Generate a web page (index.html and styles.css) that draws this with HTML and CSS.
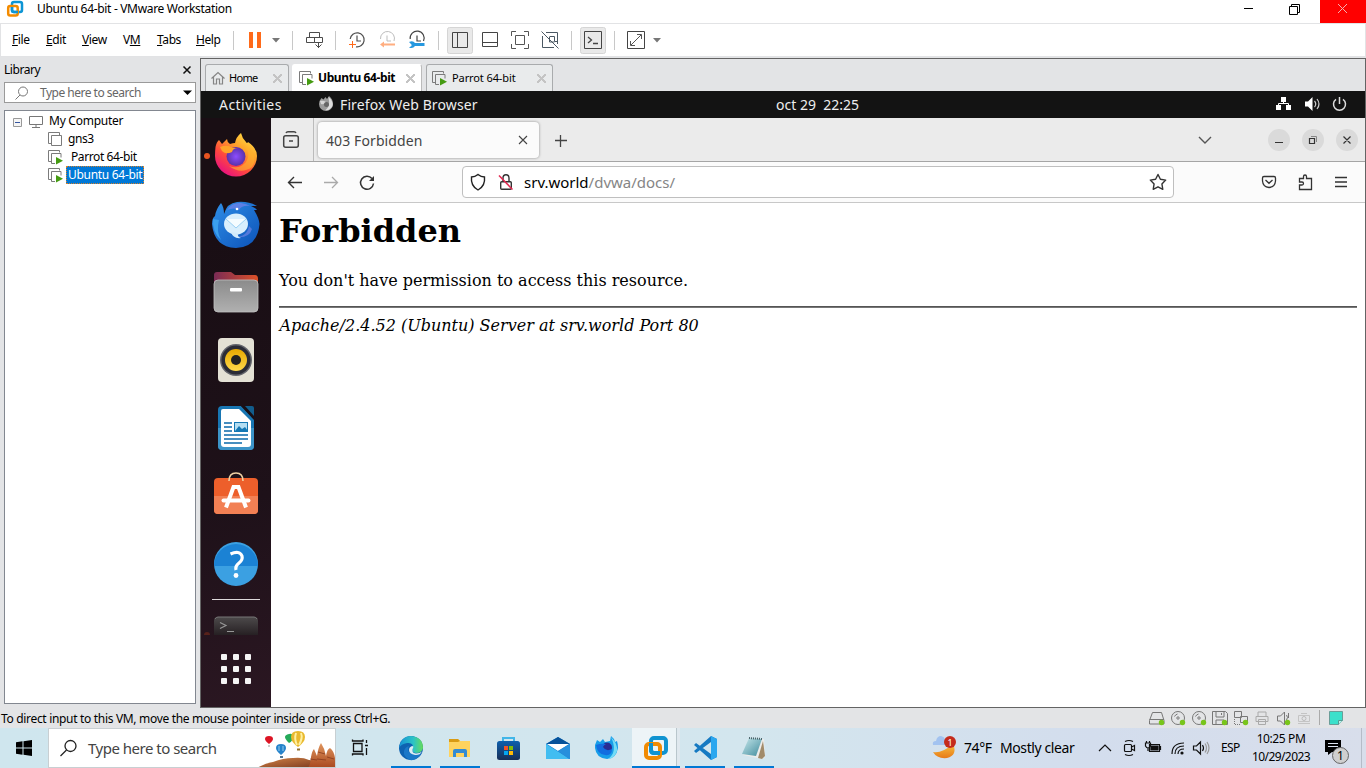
FILE: index.html
```html
<!DOCTYPE html>
<html lang="en">
<head>
<meta charset="utf-8">
<title>Ubuntu 64-bit - VMware Workstation</title>
<link rel="stylesheet" href="styles.css">
</head>
<body>
<svg class="defs" width="0" height="0">
<defs>
<linearGradient id="fire" x1="1" y1="0" x2=".3" y2="1"><stop offset="0" stop-color="#fff44f"/><stop offset=".4" stop-color="#ffa52a"/><stop offset=".7" stop-color="#ff4a3c"/><stop offset="1" stop-color="#e8117f"/></linearGradient>
<radialGradient id="purple"><stop offset="0" stop-color="#8c4dff"/><stop offset="1" stop-color="#5a32a8"/></radialGradient>
<linearGradient id="bird" x1="0" y1="0" x2="1" y2="1"><stop offset="0" stop-color="#2f8fe8"/><stop offset="1" stop-color="#0c52b8"/></linearGradient>
<linearGradient id="gray" x1="0" y1="0" x2="0" y2="1"><stop offset="0" stop-color="#8b8b8b"/><stop offset="1" stop-color="#b0b0b0"/></linearGradient>
<linearGradient id="foldback"><stop offset="0" stop-color="#7a2b55"/><stop offset="1" stop-color="#dd5128"/></linearGradient>
<linearGradient id="yellow" x1="0" y1="0" x2="0" y2="1"><stop offset="0" stop-color="#e6a800"/><stop offset="1" stop-color="#ffd94a"/></linearGradient>
<linearGradient id="term" x1="0" y1="0" x2="0" y2="1"><stop offset="0" stop-color="#4d4a4b"/><stop offset="1" stop-color="#262023"/></linearGradient>
<linearGradient id="edge" x1="0" y1="0" x2="1" y2="0"><stop offset="0" stop-color="#1691d6"/><stop offset=".6" stop-color="#2cc3c5"/><stop offset="1" stop-color="#67dc58"/></linearGradient>
<linearGradient id="store" x1="0" y1="0" x2="0" y2="1"><stop offset="0" stop-color="#0d60ad"/><stop offset="1" stop-color="#182f58"/></linearGradient>
<linearGradient id="moon" x1="0" y1="0" x2="0" y2="1"><stop offset="0" stop-color="#f8bf3e"/><stop offset="1" stop-color="#e77a18"/></linearGradient>
<linearGradient id="rock" x1="0" y1="0" x2="1" y2="1"><stop offset="0" stop-color="#d28347"/><stop offset="1" stop-color="#6b2c16"/></linearGradient>
<linearGradient id="spire" x1="0" y1="0" x2="0" y2="1"><stop offset="0" stop-color="#e0955d"/><stop offset="1" stop-color="#a8481f"/></linearGradient>
<linearGradient id="note" x1="0" y1="0" x2="1" y2="1"><stop offset="0" stop-color="#c8e8ec"/><stop offset="1" stop-color="#3f8b9c"/></linearGradient>
<g id="vms" fill="none" stroke="#7b7b7b"><path d="M3.500 11.500H.500V.500h11v3"/><path d="M3.500 3.500h10v10h-10z" fill="#fff"/></g>
<g id="vmrun"><g fill="none" stroke="#7b7b7b"><path d="M3 11.500H.500V.500h11v2"/><path d="M7 13.500H3.500V3.500h9.500v4"/></g><path d="M8 7v7.500l7-3.700z" fill="#459b12"/></g>
</defs>
</svg>

<header class="titlebar">
  <svg class="vmlogo" width="37" height="23" viewBox="0 0 37 23" fill="none" stroke-width="2.500"><rect x="12" y="2" width="10" height="10" rx="2" stroke="#0d95d4"/><rect x="8.200" y="6" width="9.500" height="9.500" rx="2" stroke="#f38b00"/><path d="M12 7v3q0 2 2 2h4" stroke="#0d95d4"/></svg>
  <span class="t title">Ubuntu 64-bit - VMware Workstation</span>
  <svg width="136" height="23" viewBox="1230 0 136 23" fill="none"><path d="M1244 8.500h9" stroke="#000"/><path d="M1289.500 6.500h8v8h-8zM1291.500 6V4.500h8v8H1298" stroke="#000"/><path d="M1320 0h46v23h-46z" fill="#f00"/><path d="M1338 4l9 9m0-9l-9 9" stroke="#f6b0b0"/></svg>
</header>

<nav class="menubar">
  <span class="t m1"><u>F</u>ile</span><span class="t m2"><u>E</u>dit</span><span class="t m3"><u>V</u>iew</span><span class="t m4">V<u>M</u></span><span class="t m5"><u>T</u>abs</span><span class="t m6"><u>H</u>elp</span>
  <svg width="430" height="32" viewBox="232 24 430 32" fill="none">
    <path d="M233.500 31v19M292.500 31v19M335.500 31v19M438.500 31v19M571.500 31v19M614.500 31v19" stroke="#c8c8c8"/>
    <path d="M249 32h4v16h-4zM257 32h4v16h-4z" fill="#ff6a1a"/>
    <path d="M272 38h8l-4 4.500zM653 38h8l-4 4.500z" fill="#777"/>
    <g stroke="#4b4b4b"><path d="M309.500 32.500h10v5h-10zM306.500 37.500h8v5h-8zM314.500 37.500h8v5h-8zM318.500 42v6M315.500 44.500l3 3 3-3"/></g>
    <g stroke="#505050" stroke-width="1.200"><path d="M350.200 39A7 7 0 1 1 356 46.800M357 35.500V41h4"/></g><path d="M349 44.500h7M352.500 41v7" stroke="#ff6a1a"/>
    <path d="M380.500 39A7 7 0 1 1 394 41M387 35.500V41h4" stroke="#bdbdbd"/><path d="M380 44.500l4-3v2h11v2h-11v2z" fill="#ffae80"/>
    <path d="M410.200 39A7 7 0 1 1 423.500 41M417 35.500V41h4" stroke="#444" stroke-width="1.200"/><path d="M409 42q4-2 6 1h9.500v3H415q-2 3-6 1.500l2.500-1.500v-1.500z" fill="#2698df"/>
    <rect x="447.500" y="27.500" width="25" height="26" rx="2" fill="#e9e9e9" stroke="#d5d5d5"/><path d="M452.500 32.500h15v15h-15zM457.500 32.500v15" stroke="#444"/>
    <path d="M482.500 32.500h15v14h-15zM482.500 42.500h15" stroke="#444"/>
    <path d="M511.500 36v-4.500h4.500M524 31.500h4.500V36M528.500 44v4.500H524M516 48.500h-4.500V44M515.500 35.500h9v9h-9z" stroke="#555"/>
    <path d="M546 32.500h11.500v11.500M557.500 41.500h-3v-5h-5M549.500 37v5h5M542.500 36v11.500H554M541.500 31.500l17 17" stroke="#4b5863"/>
    <rect x="580.500" y="27.500" width="25" height="26" rx="2" fill="#e9e9e9" stroke="#d5d5d5"/><path d="M584.500 31.500h17v17h-17z" stroke="#444"/><path d="M588 37l3.500 3-3.500 3M593 43.500h5" stroke="#444" stroke-width="1.300"/>
    <path d="M627.500 31.500h17v17h-17z" stroke="#444"/><path d="M631 45l10-10M637 34.500h4.500V39M630.500 41v4.500H635" stroke="#555"/>
  </svg>
</nav>

<main class="work">
  <aside class="library">
    <div class="libhead"><span class="t lib">Library</span><svg width="10" height="10" viewBox="0 0 10 10"><path d="M1.500 1.500l7 7m0-7l-7 7" stroke="#111" stroke-width="1.500"/></svg></div>
    <div class="libsearch"><svg width="35" height="18" viewBox="5 83 35 18" fill="none" stroke="#777"><circle cx="23" cy="90.500" r="4.500"/><path d="M20 94l-4.500 4.500"/></svg><span class="t ls">Type here to search</span><svg width="11" height="6" viewBox="0 0 11 6"><path d="M1 .5h9L5.500 5z"/></svg></div>
    <div class="tree">
      <div class="row r0"><svg width="44" height="18" viewBox="5 112 44 18" fill="none"><path d="M13.500 118.500h8v8h-8z" fill="#f5f5f5" stroke="#999"/><path d="M15 122.500h5" stroke="#3556a0"/><path d="M29.500 116.500h13v8h-13zM36 125v2M32 127.500h8" stroke="#777"/></svg><span class="t mc">My Computer</span></div>
      <div class="row"><svg width="15" height="15" viewBox="0 0 15 15"><use href="#vms"/></svg><span class="t gn">gns3</span></div>
      <div class="row"><svg width="15" height="15" viewBox="0 0 15 15"><use href="#vmrun"/></svg><span class="t pa">Parrot 64-bit</span></div>
      <div class="row"><svg width="15" height="15" viewBox="0 0 15 15"><use href="#vmrun"/></svg><span class="t ub">Ubuntu 64-bit</span></div>
    </div>
  </aside>

  <section class="console">
    <div class="vmtabs">
      <div class="vmtab home"><svg width="24" height="27" viewBox="205 65 24 27" fill="none" stroke="#858585" stroke-width="1.200"><path d="M211.500 78.500l6.500-6 6.500 6M213.500 77v7h3v-5h3v5h3v-7"/></svg><span class="t">Home</span><i class="x"></i></div>
      <div class="vmtab cur"><svg width="15" height="15" viewBox="0 0 15 15"><use href="#vmrun"/></svg><span class="t">Ubuntu 64-bit</span><i class="x"></i></div>
      <div class="vmtab par"><svg width="15" height="15" viewBox="0 0 15 15"><use href="#vmrun"/></svg><span class="t">Parrot 64-bit</span><i class="x"></i></div>
    </div>
    <div class="gnome">
      <span class="u act">Activities</span>
      <svg width="22" height="27" viewBox="318 91 22 27"><path d="M319.500 101l2-3 2 1.500 2-2.500 1.500 2 2-3q4 3 4 8a7 7 0 0 1-14 0z" fill="#9b9b9b"/><path d="M328.500 97q5 4 4 9-3 5-7 4 5-3 3-13z" fill="#ddd"/><path d="M320 101q3-1 6 1-2 3-5 2z" fill="#d5d5d5"/><circle cx="326.500" cy="104.500" r="2.500" fill="#666"/></svg>
      <span class="u ffb">Firefox Web Browser</span>
      <span class="u clock">oct 29&nbsp; 22:25</span>
      <svg width="85" height="27" viewBox="1270 91 85 27" fill="none"><path d="M1281 97h5v5h-5zM1276 105h5v5h-5zM1286 105h5v5h-5z" fill="#fff"/><path d="M1283.500 101v3M1278.500 106v-2.500h10v2.500" stroke="#fff"/><path d="M1305 101.500h3l4.500-4.500v14l-4.500-4.500h-3z" fill="#fff"/><path d="M1314.500 101q2.500 3 0 6M1317 99q4 5 0 10" stroke="#ccc" stroke-width="1.200"/><path d="M1336 99.300a6 6 0 1 0 7 0M1339.500 97v7" stroke="#ddd" stroke-width="1.500"/></svg>
    </div>
    <div class="desk">
      <div class="dock">
        <svg width="70" height="72" viewBox="201 118 70 72"><circle cx="207" cy="156" r="3" fill="#e95420"/><path d="M215.500 147q1-5 3.500-7l3 4 5-5q0 3 3 5 3-1 5-1 1-6 6-10 1 5 5 9 1 2 2 0 9 6 9 14a21 20.500 0 0 1-42 0q0-5 .5-9z" fill="url(#fire)"/><circle cx="236" cy="156.500" r="9.500" fill="url(#purple)"/><path d="M220 147q7-3 13 1h5q-5 0-6 4-6 3-10-1z" fill="#ffa329"/><path d="M243 144q9 9 3 18-7 8-17 4 12 9 23 1 8-13-9-23z" fill="#ffb22c" opacity=".65"/></svg>
        <svg width="70" height="68" viewBox="201 190 70 68"><path d="M212 224q0-6 3-8 1-7 6-13 3 4 3 11 3-11 13-12 12-1 20 4h-6q5 2 6 4h-3q5 8 5.500 14-2 23-23.500 24-22-1-24-24z" fill="url(#bird)"/><path d="M227 210q5-8 14-7 6 1 9 3-8-1-11 4-5-3-12 0z" fill="#6f82ea" opacity=".75"/><path d="M249 226q-2 11-14 11 14 2 17-8z" fill="#6d83e2" opacity=".7"/><ellipse cx="236" cy="224" rx="12" ry="10.500" fill="#d9effd"/><path d="M226 219l10 9 10-9" fill="#f5fcff" stroke="#9bd1f4"/><path d="M231 232q2 7 10 6-4-1-3-5z" fill="#d3ebfb"/><circle cx="237" cy="209" r="1.300" fill="#fff"/><path d="M213 219q-1 13 8 21-5-9-2-20z" fill="#3ba0ee"/></svg>
        <svg width="70" height="68" viewBox="201 258 70 68"><path d="M214 275q0-3 3-3h14l4 3h20q3 0 3 4v8h-44z" fill="url(#foldback)"/><rect x="214" y="280" width="44" height="32" rx="4" fill="url(#gray)" stroke="#c2c2c2" stroke-width=".8"/><rect x="230" y="288" width="12" height="3.500" rx="1" fill="#fff"/></svg>
        <svg width="70" height="68" viewBox="201 326 70 68"><rect x="218" y="338" width="36" height="44" rx="4" fill="#e4e1d5"/><circle cx="236" cy="360" r="16" fill="#63646b"/><circle cx="236" cy="360" r="14.500" fill="#2b2c36"/><circle cx="236" cy="360" r="11" fill="url(#yellow)"/><circle cx="236" cy="360" r="5" fill="#222"/></svg>
        <svg width="70" height="66" viewBox="201 394 70 66"><path d="M218 410q0-4 4-4h19l13 13v27q0 4-4 4h-28q-4 0-4-4z" fill="#1876b3"/><path d="M218 428h36v18q0 4-4 4h-28q-4 0-4-4z" fill="#3c94c8"/><path d="M221 411q0-2 2-2h16l12 12v23q0 3-3 3h-24q-3 0-3-3z" fill="#fff"/><path d="M241 406h4l9 9v5z" fill="#190f15"/><path d="M245 406h7q2 0 2 2v8z" fill="#125d8d"/><path d="M224 423h8M224 427h8M224 431h8M224 435h24M224 439h24M224 443h18" stroke="#0b6aaa" stroke-width="1.700"/><rect x="234.500" y="422.500" width="13" height="9" fill="#b4def2" stroke="#1578b4"/><path d="M235 431l4-5 3 3 3-2 3 4z" fill="#1578b4"/></svg>
        <svg width="70" height="68" viewBox="201 460 70 68"><rect x="214" y="478" width="44" height="36" rx="4" fill="#ed5f2b"/><path d="M214 496h44v14q0 4-4 4h-36q-4 0-4-4z" fill="#f28054"/><path d="M229 481q0-8 7-8t7 8" fill="none" stroke="#f0d1a4" stroke-width="1.600"/><path d="M226 507.500l7.500-20.500h5l7.500 20.500" fill="none" stroke="#fff" stroke-width="4"/><path d="M223.500 500.500h25" stroke="#fff" stroke-width="4" stroke-linecap="round"/></svg>
        <svg width="70" height="66" viewBox="201 528 70 66"><circle cx="236" cy="564" r="22" fill="#3ba0e2"/><path d="M214 566a22 22 0 0 1 44 0z" fill="#1b82d4"/><path d="M230.500 554q9-4 11.500 2 1 4-3 7-4 3-3 7" fill="none" stroke="#fff" stroke-width="3.200"/><circle cx="236" cy="575.500" r="2.400" fill="#fff"/></svg>
        <svg width="70" height="46" viewBox="201 594 70 46"><path d="M212 599.500h48" stroke="#dedadb"/><path d="M214 635v-14q0-4 4-4h36q4 0 4 4v14z" fill="url(#term)"/><path d="M215 619q1-2 3-2h36q2 0 3 2" stroke="#777" fill="none"/><path d="M220 622.500l6 3-6 3M227 631.500h7" fill="none" stroke="#969696" stroke-width="1.200"/><path d="M204 635q0-3 3-3t3 3z" fill="#57221b"/></svg>
        <svg width="70" height="67" viewBox="201 640 70 67" fill="#f5f5f5"><g id="dots"><rect x="221" y="654" width="6" height="6" rx="1"/><rect x="233" y="654" width="6" height="6" rx="1"/><rect x="245" y="654" width="6" height="6" rx="1"/></g><use href="#dots" y="12"/><use href="#dots" y="24"/></svg>
      </div>
      <div class="firefox">
        <div class="fftabs">
          <svg width="46" height="43" viewBox="271 118 46 43" fill="none"><path d="M313.500 118v43" stroke="#bbb"/><path d="M286 133q.5-1.300 2-1.300h6q1.500 0 2 1.300" stroke="#444" stroke-width="1.400"/><rect x="283.700" y="135.700" width="14.600" height="11.600" rx="2" stroke="#444" stroke-width="1.500"/><path d="M289 141h4" stroke="#444" stroke-width="1.500"/></svg>
          <div class="fftab"><span class="u f403">403 Forbidden</span><svg width="10" height="10" viewBox="0 0 10 10"><path d="M1 1l8 8m0-8l-8 8" stroke="#444" stroke-width="1.100"/></svg></div>
          <svg width="40" height="43" viewBox="540 118 40 43"><path d="M555 140.500h12M560.500 135v12" stroke="#444" stroke-width="1.300"/></svg>
          <svg class="end" width="175" height="43" viewBox="1190 118 175 43" fill="none"><path d="M1199 137l6 6 6-6" stroke="#555" stroke-width="1.400"/><g fill="#dadada"><circle cx="1279" cy="140" r="11"/><circle cx="1313" cy="140" r="11"/><circle cx="1347" cy="140" r="11"/></g><path d="M1275 142.500h8M1309.500 138.500h5v5h-5zM1343.500 136.500l7 7m0-7l-7 7" stroke="#333" stroke-width="1.200"/><path d="M1311 136.500h5.500v5.500" stroke="#888"/></svg>
        </div>
        <div class="ffnav">
          <svg width="191" height="40" viewBox="271 162 191 40" fill="none"><path d="M302 182.500h-13.500M294 177l-5.500 5.500 5.500 5.500" stroke="#333" stroke-width="1.400"/><path d="M324 182.500h13.500M332 177l5.500 5.500-5.500 5.500" stroke="#aaa" stroke-width="1.300"/><path d="M372 178.500a6.500 6.500 0 1 0 1.500 5" stroke="#333" stroke-width="1.500"/><path d="M374 176v5h-5z" fill="#333"/></svg>
          <div class="url"><svg width="61" height="30" viewBox="463 167 61 30" fill="none"><path d="M478 174.500q3 2.500 6.500 2.500 1 9-6.500 13-7.500-4-6.500-13 3.500 0 6.500-2.500z" stroke="#222" stroke-width="1.400"/><rect x="500.700" y="181.700" width="10.600" height="7.600" rx="1" stroke="#333" stroke-width="1.400"/><path d="M503 182v-4q0-3.300 3-3.300t3 3.300v4" stroke="#333" stroke-width="1.400"/><path d="M499 175.500l13.500 14" stroke="#e22850" stroke-width="1.500"/></svg><span class="u addr">srv.world<em>/dvwa/docs/</em></span><svg class="end" width="30" height="30" viewBox="1143 167 30 30"><path d="M1158 174.500l2.400 4.800 5.300.8-3.800 3.800.9 5.400-4.800-2.500-4.800 2.500.9-5.400-3.800-3.800 5.300-.8z" fill="none" stroke="#333" stroke-width="1.400" stroke-linejoin="round"/></svg></div>
          <svg class="end" width="115" height="40" viewBox="1250 162 115 40" fill="none" stroke="#333" stroke-width="1.300"><path d="M1264 176.500h10q1.500 0 1.500 1.500v3q-.5 6-6.500 6.500-6-.5-6.500-6.500v-3q0-1.500 1.500-1.500zM1265.500 180l3.500 3.300 3.500-3.300"/><path d="M1299.500 178.500h4v-2q0-1.500 1.500-1.500t1.500 1.500v2h5v11h-12v-4.500h2.500q1.500 0 1.500-1.500t-1.500-1.500h-2.500z"/><path d="M1335 177.500h12M1335 182h12M1335 186.500h12"/></svg>
        </div>
        <div class="page"><h1>Forbidden</h1><p>You don't have permission to access this resource.</p><hr><address>Apache/2.4.52 (Ubuntu) Server at srv.world Port 80</address></div>
      </div>
    </div>
  </section>
</main>

<footer class="status">
  <span class="t st">To direct input to this VM, move the mouse pointer inside or press Ctrl+G.</span>
  <svg width="226" height="20" viewBox="1140 709 226 20" fill="none" stroke="#777">
    <path d="M1152.500 713.500h9l2.500 8v3.500h-14.500v-3.500zM1149.500 720.500h14.500"/>
    <g id="disc"><circle cx="1178" cy="719" r="6.500"/><circle cx="1178" cy="719" r="1.200"/><path d="M1174.500 717.500q1-2 3-2.500"/></g><use href="#disc" x="21"/>
    <path d="M1212.500 712.500h13l2 2v11h-15zM1216 713v5h8v-5M1216 725v-4h8v4M1221.500 714v2"/>
    <path d="M1234.500 712.500h7v6h-7zM1240.500 717.500h7v6h-7z"/><path d="M1234.500 720v5.500h6" stroke-dasharray="1 1"/>
    <path d="M1258 717v-4h8v4M1256 717.500h12v5h-12zM1258.500 720.500h7v5h-7z" stroke="#aaa"/>
    <path d="M1277.500 717h3l4-4v13l-4-4h-3zM1286.500 716q2 2.500 0 5M1288.500 714v5"/>
    <path d="M1298.500 716.500h11v6h-11zM1301 714.500h6M1298 724.500h12" stroke="#c4c4c4"/><circle cx="1304" cy="719.500" r="2" stroke="#bbb"/>
    <g fill="#78c51b" stroke="none"><circle cx="1161.500" cy="723.500" r="2.700"/><circle cx="1182.500" cy="723.500" r="2.700"/><circle cx="1203.500" cy="723.500" r="2.700"/><circle cx="1224.500" cy="723.500" r="2.700"/><circle cx="1245.500" cy="723.500" r="2.700"/><circle cx="1287.500" cy="723.500" r="2.700"/></g>
    <path d="M1319.500 711v15" stroke="#aaa"/><path d="M1329.500 712.500h13v9l-4 4h-9z" fill="#3be0cb" stroke="#6b9d98"/><path d="M1338.500 725.500v-4h4" fill="#b7f5ec" stroke="#579b92"/>
  </svg>
</footer>

<footer class="taskbar">
  <svg width="48" height="40" viewBox="0 728 48 40"><path d="M16 742.300l6.500-1v6.200H16zM23.500 741.200l8.500-1.200v7.500h-8.500zM16 748.500h6.500v6.200l-6.500-1zM23.500 748.500H32v7.500l-8.500-1.200z"/></svg>
  <div class="tsearch"><svg width="39" height="38" viewBox="49 729 39 38" fill="none" stroke="#222" stroke-width="1.300"><circle cx="70.500" cy="746" r="5.500"/><path d="M66.500 750l-6 6"/></svg><span class="t ts">Type here to search</span>
    <svg class="end" width="82" height="38" viewBox="253 729 82 38"><path d="M257 768q8-5 16-6 10-4 20-4 10-1 16 2l26 3v6z" fill="url(#rock)"/><path d="M308 768q3-5 3-11 1-6 3-8l3 7q1-8 4-13 4 6 5 13 1-7 4-8 4 3 5 10v10z" fill="url(#spire)"/><path d="M310 759l7 1M318 752l7 2M327 757l7 2M317 759l9 1" stroke="#83351a" opacity=".7"/><path d="M269 744q-4-3-4-5 0-3 4-3t4 3q0 2-4 5z" fill="#dc1424"/><path d="M268 746h2" stroke="#999"/><path d="M281 755q-5-4-5-7 0-4 5-4t5 4q0 3-5 7z" fill="#2683cb"/><path d="M279 746v5M283 746v5" stroke="#91cbed"/><path d="M280 757h3" stroke="#4f7796" stroke-width="2"/><path d="M289 743q-4-4-4-6t4-3 4 3-4 6z" fill="#25aa5a"/><path d="M298 747q-7-5-7-10 0-6 7-6t7 6q0 5-7 10z" fill="#e9b92e"/><path d="M296 733q-2 6 1 12M301 733q2 5-2 12" stroke="#fff0a2" fill="none" stroke-width="2"/><path d="M297 749.500h3" stroke="#94702d" stroke-width="2"/></svg>
  </div>
  <svg width="51" height="40" viewBox="336 728 51 40" fill="none" stroke="#111" stroke-width="1.300"><path d="M353.500 743.500h8.500v8h-8.500zM352.500 739.500v1.500h10.500v-1.500M352.500 755.500V754h10.500v1.500M366.500 740v3M366.500 748v7M365 745.500h3"/></svg>
  <div class="apps">
    <svg class="run" width="40" height="40" viewBox="391 728 40 40"><circle cx="411" cy="748" r="12" fill="#0e62b1"/><path d="M399 748q2-12 12-12 12 1 12 12-1 5-7 5-5-1-3-4 1-7-6-6-6 1-8 5z" fill="url(#edge)"/><path d="M409 746q-3 5 3 8 4 2 9 0-5 7-11 6-7-3-6-9 1-4 5-5z" fill="#1b78c8"/><path d="M413 748q-2 5 3 5.500 4 0 6-2-2 4-7 3.500-6-1-6-5 0-3 3-4 2 0 1 2z" fill="#dcecf2"/></svg>
    <svg class="run" width="40" height="40" viewBox="440 728 40 40"><path d="M449 739h9l2 2h10v16h-21z" fill="#ffd35e"/><path d="M449 739h9l2 2-2 1h-9z" fill="#d99b13"/><path d="M453 757v-6q0-2 2-2h10q2 0 2 2v6h-3v-4h-8v4z" fill="#338bd2"/></svg>
    <svg width="40" height="40" viewBox="488 728 40 40"><path d="M503 742v-4h11v4" fill="none" stroke="#42b6e8" stroke-width="2"/><rect x="497" y="741" width="23" height="19" rx="2.500" fill="url(#store)"/><path d="M504 746h4v4h-4z" fill="#f35325"/><path d="M509 746h4v4h-4z" fill="#81bc06"/><path d="M504 751h4v4h-4z" fill="#05a6f0"/><path d="M509 751h4v4h-4z" fill="#ffba08"/></svg>
    <svg width="40" height="40" viewBox="538 728 40 40"><path d="M546 744l12-7 12 7v15h-24z" fill="#1681d1"/><path d="M546 744l12-7 12 7z" fill="#07529a"/><path d="M547 744h22l-11 7z" fill="#fff"/><path d="M546 744l24 15h-24z" fill="#42bdf1"/><path d="M570 744v15h-1l-11-8z" fill="#278fdc"/></svg>
    <svg width="40" height="40" viewBox="587 728 40 40"><path d="M595 745l2-5 3 2 3-3 2 3 5-1 1-5q3 2 4 6l2-1q1 3 1 7-2 11-11 11-11-1-12-11z" fill="#179de9"/><path d="M611 737q7 7 6 14-3 8-9 8 10-7 3-22z" fill="#72dcf6"/><circle cx="607" cy="747.500" r="5" fill="#292c93"/><path d="M596 745q5-2 10-1-2 1-3 3 3 5 9 2 0 7-7 6-8-1-9-10z" fill="#126de0"/></svg>
    <svg class="run active" width="48" height="40" viewBox="632 728 48 40" fill="none" stroke-width="4"><rect x="651" y="738" width="15" height="15" rx="3" stroke="#1093d0"/><rect x="646" y="744" width="14" height="14" rx="3" stroke="#f08b04"/><path d="M651 743v7q0 3 3 3h6" stroke="#1093d0"/><path d="M676.500 728v38" stroke="#b9c6cc" stroke-width="1"/><path d="M678.500 728v38" stroke="#dfe8ee" stroke-width="3"/></svg>
    <svg class="run" width="40" height="40" viewBox="685 728 40 40"><path d="M711 736l6 3v18l-6 3-17-15 2-2 15 11v-12l-15 11-2-2z" fill="#167ac2"/><path d="M711 736l6 3v18l-6 3z" fill="#2ba7ef"/></svg>
    <svg class="run" width="40" height="40" viewBox="734 728 40 40"><path d="M749 738l15 1 1 18-3 2-19-4z" fill="#ececea"/><path d="M749 738l13 1-6 17-14-2z" fill="url(#note)"/><path d="M763 741l2 15-3 3-4-1z" fill="#a18b6a"/><path d="M749 738l13 1" stroke="#4b646b" stroke-width="2" stroke-dasharray="1 1"/></svg>
  </div>
  <svg class="end" width="39" height="40" viewBox="925 728 39 40"><path d="M933 752q8 2 20-8 5 11-6 14-10 1-14-6z" fill="url(#moon)"/><path d="M933 745q-1-4 3-4 1-5 5-5 4 1 4 4 4 1 3 5z" fill="#a3c3f0"/><circle cx="950" cy="742" r="6" fill="#c42b1c"/><text class="badge" x="950" y="745.500" fill="#fff">1</text></svg>
  <span class="t temp">74°F</span><span class="t sky">Mostly clear</span>
  <svg width="126" height="40" viewBox="1094 728 126 40" fill="none" stroke="#111" stroke-width="1.200"><path d="M1099 751l6-6 6 6"/><rect x="1124.500" y="744.500" width="7" height="7" rx="1"/><path d="M1131.500 747l3-1.500v5l-3-1.500M1125 741.500q4-2 8 0M1125 754.500q4 2 8 0"/><path d="M1149.500 744.500h10v7h-10z"/><path d="M1151 746h7v4h-7z" fill="#111"/><path d="M1160.500 746v4M1145.500 743h5v3q-1 2-2.500 2t-2.500-2zM1146.500 743v-2M1149.500 743v-2M1148 748v3"/><path d="M1172 754q0-11 12-11M1175 754q0-8 9-8M1178 754q0-5 6-5"/><circle cx="1182" cy="753" r="1.600" fill="#111" stroke="none"/><path d="M1193.500 746h3l4-4v12l-4-4h-3zM1202.500 745q2 3 0 6"/><path d="M1205 743.500q3 4.500 0 9M1207 742q4 6 0 12" stroke="#999"/></svg>
  <span class="t esp">ESP</span>
  <div class="when"><span class="t w1">10:25 PM</span><span class="t w2">10/29/2023</span></div>
  <svg width="46" height="40" viewBox="1320 728 46 40"><path d="M1325 740h16v12h-9l-4 3v-3h-3z"/><path d="M1328 743.500h10M1328 746.500h10" stroke="#dce2ef"/><circle cx="1340.500" cy="755.500" r="8" fill="#cfcfcf" stroke="#666"/><text class="badge big" x="1340.500" y="760">1</text><path d="M1361.500 728v40" stroke="#b5bcc8"/></svg>
</footer>
</body>
</html>
```
FILE: styles.css
```css
* { box-sizing: border-box; }
body { margin: 0; width: 1366px; height: 768px; overflow: hidden; display: flex; flex-direction: column; background: #e3e4e6; font-family: "Noto Sans", "Open Sans", sans-serif; font-size: 12px; color: #000; }
svg { display: block; flex: none; }
.defs { position: absolute; }
.t, .u { white-space: nowrap; flex: none; }
.t { font-size: 12px; letter-spacing: -0.4px; line-height: 16px; }
.u { font-family: "Noto Sans", sans-serif; font-size: 14px; line-height: 20px; }
.end { margin-left: auto; }

.titlebar { height: 23px; display: flex; background: #fff; flex: none; }
.title { line-height: 18px; letter-spacing: -0.32px; margin-right: auto; }
.menubar { height: 34px; flex: none; display: flex; align-items: center; background: #fff; border: 1px solid #e2e3e5; padding-left: 11px; }
.m1 { width: 34px; }
.m2 { width: 36px; }
.m3 { width: 41px; }
.m4 { width: 34px; }
.m5 { width: 39px; }
.m6 { width: 36px; }
.menubar u { text-underline-offset: 1px; }

.work { height: 651px; flex: none; display: flex; }
.library { width: 200px; padding: 5px 4px 0; flex: none; }
.libhead { display: flex; justify-content: space-between; align-items: center; height: 16px; padding-right: 4px; }
.lib { letter-spacing: -0.45px; }
.libsearch { display: flex; align-items: center; height: 21px; margin-top: 4px; background: #fff; border: 1px solid #9a9a9a; color: #666; padding-right: 2px; }
.libsearch .t { margin-right: auto; letter-spacing: -0.5px; }
.tree { height: 594px; margin-top: 7px; background: #fff; border: 1px solid #828790; padding-top: 1px; }
.row { display: flex; align-items: center; height: 18px; padding-left: 43px; }
.row.r0 { padding-left: 0; }
.mc { letter-spacing: -0.25px; }
.gn { margin-left: 5px; }
.pa { margin-left: 8px; }
.ub { margin-left: 3px; width: 78px; height: 18px; line-height: 17px; padding-left: 2px; letter-spacing: -0.3px; background: #0078d7; color: #fff; outline: 1px dotted #d8822a; outline-offset: -1px; }

.console { flex: 1; margin-top: 1px; border: 1px solid #646464; display: flex; flex-direction: column; }
.vmtabs { height: 32px; display: flex; align-items: flex-end; padding-left: 4px; flex: none; background: #e3e4e6; }
.vmtab { display: flex; align-items: center; height: 27px; border: 1px solid #a9abad; border-bottom: 0; border-radius: 3px 3px 0 0; background: #e9ebec; }
.vmtab .x { width: 9px; height: 9px; margin: 0 6px 0 auto; background: linear-gradient(45deg, transparent 44%, #c4c4c4 44% 56%, transparent 56%), linear-gradient(-45deg, transparent 44%, #c4c4c4 44% 56%, transparent 56%); }
.home { width: 84px; }
.home svg { margin-left: -1px; }
.home .t { font-size: 11px; letter-spacing: -0.7px; }
.cur { width: 130px; margin: 0 4px 0 3px; padding-left: 6px; background: #fff; border-color: #fff #bbb #fff #fff; }
.cur .t { margin-left: 4px; font-weight: 700; }
.par { width: 127px; padding-left: 5px; }
.par .t { margin-left: 5px; font-size: 11px; letter-spacing: -0.1px; }
.gnome { height: 27px; flex: none; background: #131313; color: #eee; display: flex; align-items: center; padding-left: 18px; }
.act { width: 99px; letter-spacing: 0.45px; }
.ffb { width: 436px; letter-spacing: 0.12px; }
.gnome svg:last-child { margin: 0 10px 0 auto; }
.desk { flex: 1; display: flex; min-height: 0; }
.dock { width: 70px; flex: none; background: linear-gradient(165deg, #190e14 20%, #1e1119 65%, #2b1722); }
.firefox { flex: 1; display: flex; flex-direction: column; background: #fff; }
.fftabs { height: 44px; flex: none; display: flex; background: #ebebeb; border-bottom: 1px solid #a5a5a5; }
.fftab { width: 221px; height: 36px; margin: 4px 1px 3px; padding: 2px 11px 0 8px; display: flex; align-items: center; justify-content: space-between; border-radius: 4px; background: #fbfbfb; box-shadow: 0 0 3px rgba(0,0,0,.4); color: #444; }
.fftab svg { margin-bottom: 2px; }
.f403 { letter-spacing: 0.1px; }
.ffnav { height: 41px; flex: none; display: flex; align-items: center; background: #fbfbfb; border-bottom: 1px solid #c8c8c8; }
.url { width: 712px; height: 32px; border: 1px solid #bfbfbf; border-radius: 4px; background: #fff; display: flex; align-items: center; }
.addr { font-size: 15px; }
.url em { font-style: normal; color: #858585; }
.page { padding: 9px 8px 8px; font: 16px "DejaVu Serif", serif; }
.page h1 { font-size: 32px; line-height: 38px; margin: 0 0 21.4px; }
.page p { margin: 0 0 16px; line-height: 19px; }
.page hr { margin: 0 0 8px; border: 0; height: 2px; background: linear-gradient(#555 50%, #777 50%); }
.page address { line-height: 19px; padding-left: 0.5px; }

.status { height: 20px; flex: none; display: flex; align-items: center; justify-content: space-between; padding-left: 1px; }
.st { letter-spacing: -0.32px; padding-top: 2px; }
.taskbar { height: 40px; flex: none; display: flex; align-items: center; background: linear-gradient(90deg, #cfe6ee, #d3e6ee 55%, #d3dded 80%, #d8deeb); }
.tsearch { width: 288px; height: 40px; display: flex; align-items: center; background: #fff; border: 1px solid #c8cfd2; color: #444; }
.ts { font-size: 15px; line-height: 20px; letter-spacing: -0.5px; }
.apps { display: flex; padding-left: 4px; }
.apps svg { margin-right: 9px; }
.apps svg:nth-child(2) { margin-right: 8px; }
.apps svg:nth-child(3) { margin-right: 10px; }
.apps svg:nth-child(5) { margin-right: 5px; }
.apps .run { background: linear-gradient(#0078d4, #0078d4) bottom / 100% 2px no-repeat; }
.apps svg.active { margin-right: 5px; background-color: #edf4f7; }
.temp, .sky { font-size: 14px; line-height: 20px; }
.temp { width: 36px; }
.sky { width: 94px; }
.esp { width: 26px; margin-left: 1px; letter-spacing: -0.6px; }
.when { width: 73px; padding-right: 5px; display: flex; flex-direction: column; align-items: center; }
.when .t { line-height: 18px; }
.w2 { letter-spacing: -0.6px; }
.badge { font: 9px "Noto Sans", sans-serif; text-anchor: middle; }
.badge.big { font-size: 12px; }
```
